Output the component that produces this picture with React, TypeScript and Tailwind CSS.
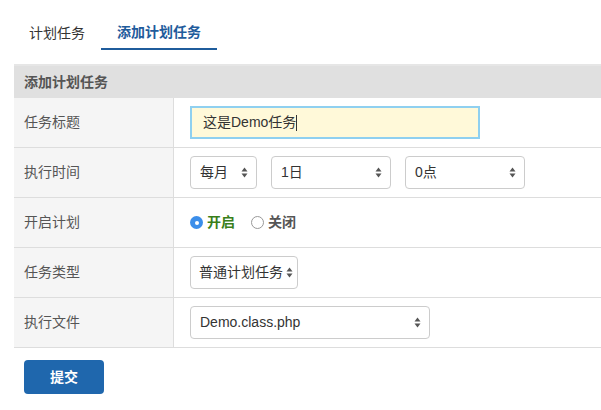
import React from "react";

const FONT = { fontFamily: '"Helvetica Neue", "Liberation Sans", "Noto Sans CJK SC", sans-serif' };

function Arrows() {
  return (
    <svg width="7" height="11" viewBox="0 0 7 11" className="shrink-0">
      <path d="M3.5 0.5 L6.5 4.5 L0.5 4.5 Z" fill="#555" />
      <path d="M3.5 10.5 L6.5 6.5 L0.5 6.5 Z" fill="#555" />
    </svg>
  );
}

function FakeSelect({ value, width }: { value: string; width: string }) {
  return (
    <div
      className={`${width} h-[33px] flex items-center justify-between pl-[9px] pr-[8px] border border-[#ccc] rounded-[4px] bg-white text-[14px] text-[#333]`}
    >
      <span>{value}</span>
      <Arrows />
    </div>
  );
}

function Row({ label, children }: { label: string; children: React.ReactNode }) {
  return (
    <div className="flex h-[50px] border-b border-[#ddd]">
      <div className="w-[160px] shrink-0 bg-[#f5f5f5] border-r border-[#ddd] flex items-center pl-[10px] text-[14px] text-[#555]">
        {label}
      </div>
      <div className="flex-1 flex items-center pl-[16px] gap-[14px]">{children}</div>
    </div>
  );
}

export default function App() {
  return (
    <div className="w-[601px] h-[410px] bg-white overflow-hidden" style={FONT}>
      {/* Tabs */}
      <div className="flex pt-[17px] pl-[13px]">
        <div className="h-[33px] px-[16px] flex items-center text-[14px] text-[#333]">计划任务</div>
        <div className="h-[33px] px-[16px] flex items-center text-[14px] font-bold text-[#1f5c9c] border-b-2 border-[#1f5c9c]">
          添加计划任务
        </div>
      </div>

      {/* Panel */}
      <div className="ml-[14px] mt-[14px] border-t-2 border-[#e6e6e6]">
        <div className="h-[32px] bg-[#e0e0e0] flex items-center pl-[10px] text-[14px] font-bold text-[#555]">
          添加计划任务
        </div>

        <Row label="任务标题">
          <div className="w-[290px] h-[33px] border-2 border-[#8fd0f0] bg-[#fff9d9] flex items-center pl-[11px] text-[14px] text-[#333]">
            <span>这是Demo任务</span>
            <span className="w-px h-[16px] bg-[#333]" />
          </div>
        </Row>

        <Row label="执行时间">
          <FakeSelect value="每月" width="w-[67px]" />
          <FakeSelect value="1日" width="w-[120px]" />
          <FakeSelect value="0点" width="w-[120px]" />
        </Row>

        <Row label="开启计划">
          <div className="flex items-center gap-[16px] text-[14px]">
            <div className="flex items-center gap-[4px]">
              <span className="w-[13px] h-[13px] rounded-full bg-[#3b8eea] flex items-center justify-center">
                <span className="w-[4px] h-[4px] rounded-full bg-white" />
              </span>
              <span className="font-bold text-[#3a7f1a]">开启</span>
            </div>
            <div className="flex items-center gap-[4px]">
              <span className="w-[13px] h-[13px] rounded-full border border-[#999] bg-white" />
              <span className="font-bold text-[#555]">关闭</span>
            </div>
          </div>
        </Row>

        <Row label="任务类型">
          <div className="w-[108px] h-[33px] flex items-center justify-between pl-[8px] pr-[4px] border border-[#ccc] rounded-[4px] bg-white text-[14px] text-[#333]">
            <span>普通计划任务</span>
            <Arrows />
          </div>
        </Row>

        <Row label="执行文件">
          <FakeSelect value="Demo.class.php" width="w-[240px]" />
        </Row>
      </div>

      <button className="ml-[24px] mt-[12px] w-[80px] h-[34px] rounded-[4px] bg-[#1f67ad] text-white text-[14px] font-bold">
        提交
      </button>
    </div>
  );
}
